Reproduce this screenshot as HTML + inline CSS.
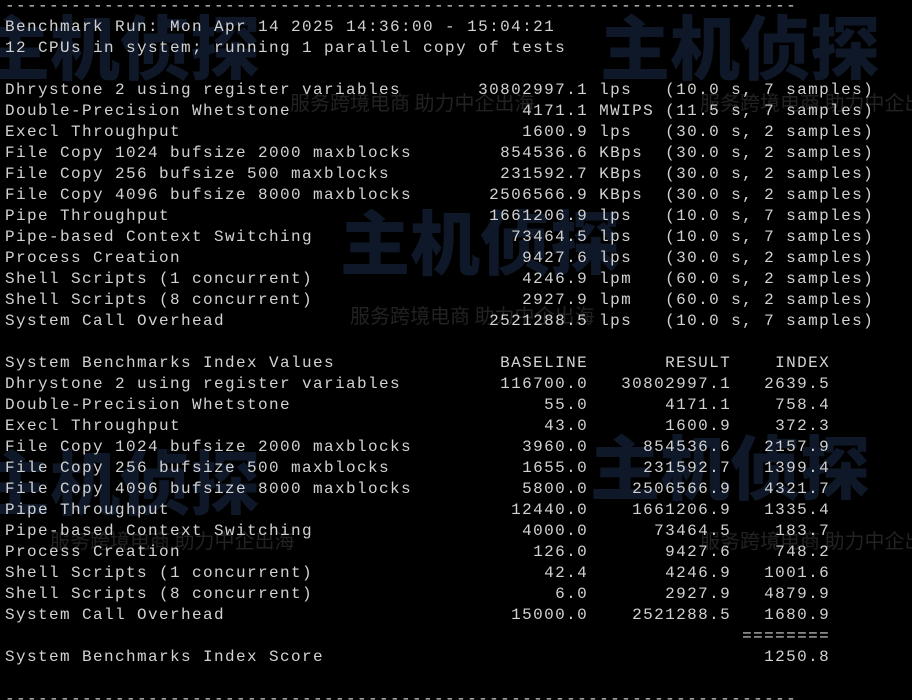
<!DOCTYPE html>
<html><head><meta charset="utf-8"><style>
html,body{margin:0;padding:0;background:#000;width:912px;height:700px;overflow:hidden;position:relative}
.wm{position:absolute;font-family:"Noto Sans CJK SC",sans-serif;font-weight:900;color:#0f1828;white-space:nowrap;line-height:1}
.wm2{position:absolute;font-family:"Noto Sans CJK SC",sans-serif;color:#222;white-space:nowrap;line-height:1;font-size:20px}
pre{position:absolute;left:5px;top:-4px;margin:0;font-family:"Liberation Mono",monospace;font-size:16px;letter-spacing:1.4px;line-height:21px;color:#d2d2d2}
</style></head><body>
<div class="wm" style="left:-20px;top:10px;font-size:70px">主机侦探</div>
<div class="wm" style="left:600px;top:10px;font-size:70px">主机侦探</div>
<div class="wm" style="left:340px;top:205px;font-size:70px">主机侦探</div>
<div class="wm" style="left:-20px;top:445px;font-size:70px">主机侦探</div>
<div class="wm" style="left:590px;top:430px;font-size:70px">主机侦探</div>
<div class="wm2" style="left:290px;top:92px">服务跨境电商 助力中企出海</div>
<div class="wm2" style="left:700px;top:92px">服务跨境电商 助力中企出海</div>
<div class="wm2" style="left:350px;top:305px">服务跨境电商 助力中企出海</div>
<div class="wm2" style="left:50px;top:530px">服务跨境电商 助力中企出海</div>
<div class="wm2" style="left:700px;top:530px">服务跨境电商 助力中企出海</div>
<pre>------------------------------------------------------------------------
Benchmark Run: Mon Apr 14 2025 14:36:00 - 15:04:21
12 CPUs in system; running 1 parallel copy of tests

Dhrystone 2 using register variables       30802997.1 lps   (10.0 s, 7 samples)
Double-Precision Whetstone                     4171.1 MWIPS (11.5 s, 7 samples)
Execl Throughput                               1600.9 lps   (30.0 s, 2 samples)
File Copy 1024 bufsize 2000 maxblocks        854536.6 KBps  (30.0 s, 2 samples)
File Copy 256 bufsize 500 maxblocks          231592.7 KBps  (30.0 s, 2 samples)
File Copy 4096 bufsize 8000 maxblocks       2506566.9 KBps  (30.0 s, 2 samples)
Pipe Throughput                             1661206.9 lps   (10.0 s, 7 samples)
Pipe-based Context Switching                  73464.5 lps   (10.0 s, 7 samples)
Process Creation                               9427.6 lps   (30.0 s, 2 samples)
Shell Scripts (1 concurrent)                   4246.9 lpm   (60.0 s, 2 samples)
Shell Scripts (8 concurrent)                   2927.9 lpm   (60.0 s, 2 samples)
System Call Overhead                        2521288.5 lps   (10.0 s, 7 samples)

System Benchmarks Index Values               BASELINE       RESULT    INDEX
Dhrystone 2 using register variables         116700.0   30802997.1   2639.5
Double-Precision Whetstone                       55.0       4171.1    758.4
Execl Throughput                                 43.0       1600.9    372.3
File Copy 1024 bufsize 2000 maxblocks          3960.0     854536.6   2157.9
File Copy 256 bufsize 500 maxblocks            1655.0     231592.7   1399.4
File Copy 4096 bufsize 8000 maxblocks          5800.0    2506566.9   4321.7
Pipe Throughput                               12440.0    1661206.9   1335.4
Pipe-based Context Switching                   4000.0      73464.5    183.7
Process Creation                                126.0       9427.6    748.2
Shell Scripts (1 concurrent)                     42.4       4246.9   1001.6
Shell Scripts (8 concurrent)                      6.0       2927.9   4879.9
System Call Overhead                          15000.0    2521288.5   1680.9
                                                                   ========
System Benchmarks Index Score                                        1250.8

------------------------------------------------------------------------
</pre>
</body></html>
